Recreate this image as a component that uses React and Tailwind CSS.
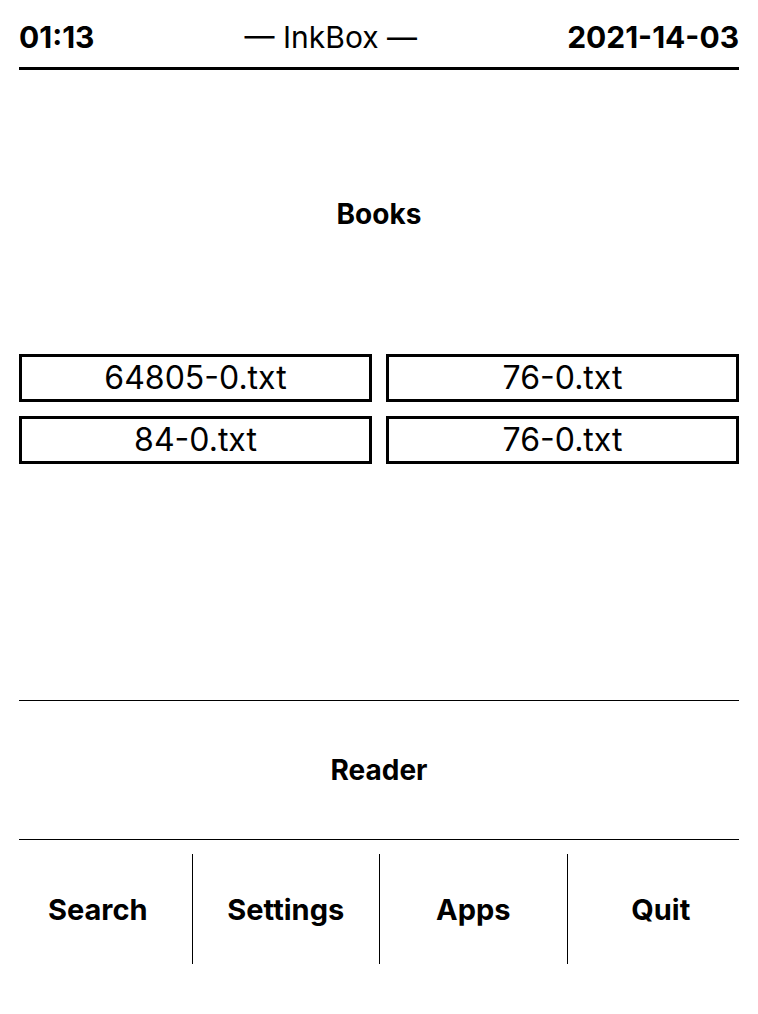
import React from "react";

export default function App() {
  const books = ["64805-0.txt", "76-0.txt", "84-0.txt", "76-0.txt"];
  const tabs = ["Search", "Settings", "Apps", "Quit"];
  return (
    <div className="w-[758px] h-[1014px] bg-white text-black overflow-hidden" style={{ fontFamily: "Inter, 'Noto Sans', sans-serif" }}>
      <div className="mx-[19px] h-[70px] border-b-[3px] border-black flex items-center justify-between pt-[7px] text-[30px] leading-none">
        <span className="font-bold">01:13</span>
        <span className="font-normal">— InkBox —</span>
        <span className="font-bold">2021-14-03</span>
      </div>
      <div className="h-[284px] flex items-center justify-center pt-[3px]">
        <span className="text-[28px] font-bold leading-none">Books</span>
      </div>
      <div className="mx-[19px] grid grid-cols-2 gap-x-[14px] gap-y-[14px]">
        {books.map((b, i) => (
          <div key={i} className="h-[48px] border-[3px] border-black flex items-center justify-center text-[32px] leading-none">
            {b}
          </div>
        ))}
      </div>
      <div className="mt-[236px] mx-[19px] h-[140px] border-t border-b border-black flex items-center justify-center">
        <span className="text-[28px] font-bold leading-none">Reader</span>
      </div>
      <div className="mt-[14px] mx-[4px] h-[110px] grid grid-cols-4">
        {tabs.map((t, i) => (
          <div key={t} className={"flex items-center justify-center text-[29px] font-bold leading-none " + (i > 0 ? "border-l border-black" : "")}>
            {t}
          </div>
        ))}
      </div>
    </div>
  );
}
